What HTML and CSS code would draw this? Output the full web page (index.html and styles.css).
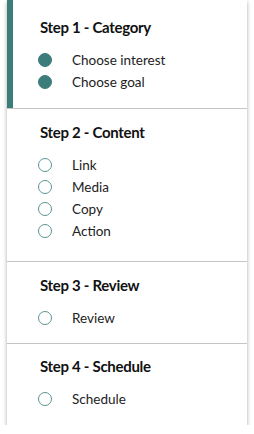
FILE: index.html
```html
<!DOCTYPE html>
<html lang="en">
<head>
    <meta charset="UTF-8">
    <meta name="viewport" content="width=device-width, initial-scale=1.0">
    <title>Steps</title>
    <link rel="stylesheet" href="styles.css">
</head>
<body>
    <div class="steps-card">
        <div class="step-section active first">
            <h3>Step 1 - Category</h3>
            <ul class="step-list">
                <li><span class="dot done"></span>Choose interest</li>
                <li><span class="dot done"></span>Choose goal</li>
            </ul>
        </div>

        <div class="step-section second">
            <h3>Step 2 - Content</h3>
            <ul class="step-list">
                <li><span class="dot"></span>Link</li>
                <li><span class="dot"></span>Media</li>
                <li><span class="dot"></span>Copy</li>
                <li><span class="dot"></span>Action</li>
            </ul>
        </div>

        <div class="step-section">
            <h3>Step 3 - Review</h3>
            <ul class="step-list">
                <li><span class="dot"></span>Review</li>
            </ul>
        </div>

        <div class="step-section last">
            <h3>Step 4 - Schedule</h3>
            <ul class="step-list">
                <li><span class="dot"></span>Schedule</li>
            </ul>
        </div>
    </div>
</body>
</html>
```

FILE: styles.css
```css
body {
    margin: 0;
    background: #fff;
    font-family: 'Lato', 'Helvetica', sans-serif;
    color: #1c1c1c;
}

.steps-card {
    width: 240px;
    margin: 0 7px;
    background: #fff;
    box-shadow: 0 2px 4px rgba(0,0,0,0.35);
}

.step-section {
    padding: 13px 0 14px 33px;
    border-top: 1px solid #c4c4c4;
}

.step-section.first {
    border-top: none;
    padding-top: 17px;
    padding-bottom: 15px;
}

.step-section.second {
    padding-bottom: 19px;
}

.step-section.last {
    padding-top: 12px;
    padding-bottom: 15px;
}

.step-section.active {
    box-shadow: inset 6px 0 0 #3b7d7a;
}

.step-section h3 {
    margin: 0 0 12px;
    font-size: 15px;
    line-height: 20px;
    font-weight: 700;
    letter-spacing: -0.3px;
    color: #111;
}

.step-list {
    list-style: none;
    margin: 0;
    padding: 0;
}

.step-list li {
    display: flex;
    align-items: center;
    height: 22px;
    font-size: 13.5px;
    color: #222;
}

.dot {
    width: 12px;
    height: 12px;
    margin: 0 20px 0 -2px;
    border: 1.5px solid #5a9592;
    border-radius: 50%;
    flex-shrink: 0;
}

.dot.done {
    background: #3b7d7a;
    border-color: #3b7d7a;
}
```
